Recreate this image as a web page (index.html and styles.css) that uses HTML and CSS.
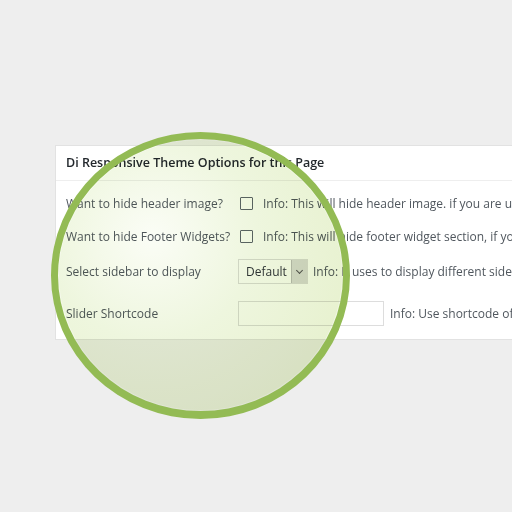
FILE: index.html
```html
<!DOCTYPE html>
<html>
<head>
    <title>Di Responsive Theme Options</title>
    <link rel="stylesheet" href="styles.css">
</head>
<body>
    <div class="panel">
        <div class="panel-head">Di Responsive Theme Options for this Page</div>
        <div class="options">
            <div class="label">Want to hide header image?</div>
            <div class="field">
                <span class="check"></span>
                <span class="info">Info: This will hide header image. if you are using</span>
            </div>

            <div class="label">Want to hide Footer Widgets?</div>
            <div class="field">
                <span class="check"></span>
                <span class="info">Info: This will hide footer widget section, if you</span>
            </div>

            <div class="label">Select sidebar to display</div>
            <div class="field">
                <span class="select">Default<span class="arrow"></span></span>
                <span class="info">Info: It uses to display different sidebar</span>
            </div>

            <div class="label">Slider Shortcode</div>
            <div class="field">
                <span class="text-input"></span>
                <span class="info">Info: Use shortcode of</span>
            </div>
        </div>
    </div>

    <!-- magnifier lens over the form -->
    <div class="lens">
        <div class="lens-glass"></div>
    </div>
</body>
</html>
```

FILE: styles.css
```css
html, body {
    margin: 0;
    height: 100%;
}
body {
    background: #eeeeee;
    font-family: 'Open Sans', 'Noto Sans', sans-serif;
    font-size: 12px;
    color: #50575e;
    overflow: hidden;
    position: relative;
}

.panel {
    margin: 145px 0 0 55px;
    background: #fff;
    border: 1px solid #e2e2e2;
    border-right: none;
}
.panel-head {
    height: 34px;
    line-height: 34px;
    padding-left: 10px;
    border-bottom: 1px solid #eeeeee;
    font-weight: 600;
    font-size: 12.5px;
    color: #23282d;
    white-space: nowrap;
}

.options {
    display: grid;
    grid-template-columns: 172px 1fr;
    grid-template-rows: 34px 32px 38px 46px;
    padding: 5px 0 3px 10px;
}
.label {
    display: flex;
    align-items: center;
    white-space: nowrap;
}
.field {
    display: flex;
    align-items: center;
    white-space: nowrap;
    overflow: hidden;
}

.check {
    width: 11px;
    height: 11px;
    border: 1px solid #5e666d;
    border-radius: 1px;
    margin: 0 10px 0 2px;
    flex: none;
}

.select {
    display: flex;
    align-items: center;
    justify-content: space-between;
    width: 70px;
    height: 25px;
    box-sizing: border-box;
    border: 1px solid #dddddd;
    padding-left: 7px;
    margin-right: 5px;
    color: #32373c;
    flex: none;
}
.select .arrow {
    width: 15px;
    height: 23px;
    background: #dcdcdc;
    border-left: 1px solid #bdbdbd;
    position: relative;
}
.select .arrow::after {
    content: '';
    position: absolute;
    left: 5px;
    top: 8px;
    width: 4px;
    height: 4px;
    border-right: 1px solid #555;
    border-bottom: 1px solid #555;
    transform: rotate(45deg);
}

.text-input {
    width: 146px;
    height: 25px;
    box-sizing: border-box;
    border: 1px solid #dddddd;
    margin-right: 6px;
    flex: none;
}

.lens {
    position: absolute;
    left: 51px;
    top: 132px;
    width: 299px;
    height: 287px;
    box-sizing: border-box;
    border-radius: 50%;
    border: 7px solid #93bb54;
    border-bottom-width: 8px;
}
.lens-glass {
    height: 100%;
    border-radius: 50%;
    background: radial-gradient(circle at 33% 36%,
        #fbfdf6 0%,
        #eef6de 40%,
        #e4efc8 100%);
    mix-blend-mode: multiply;
    box-shadow: inset 0 0 0 1px rgba(255, 255, 255, 0.35);
}
```
